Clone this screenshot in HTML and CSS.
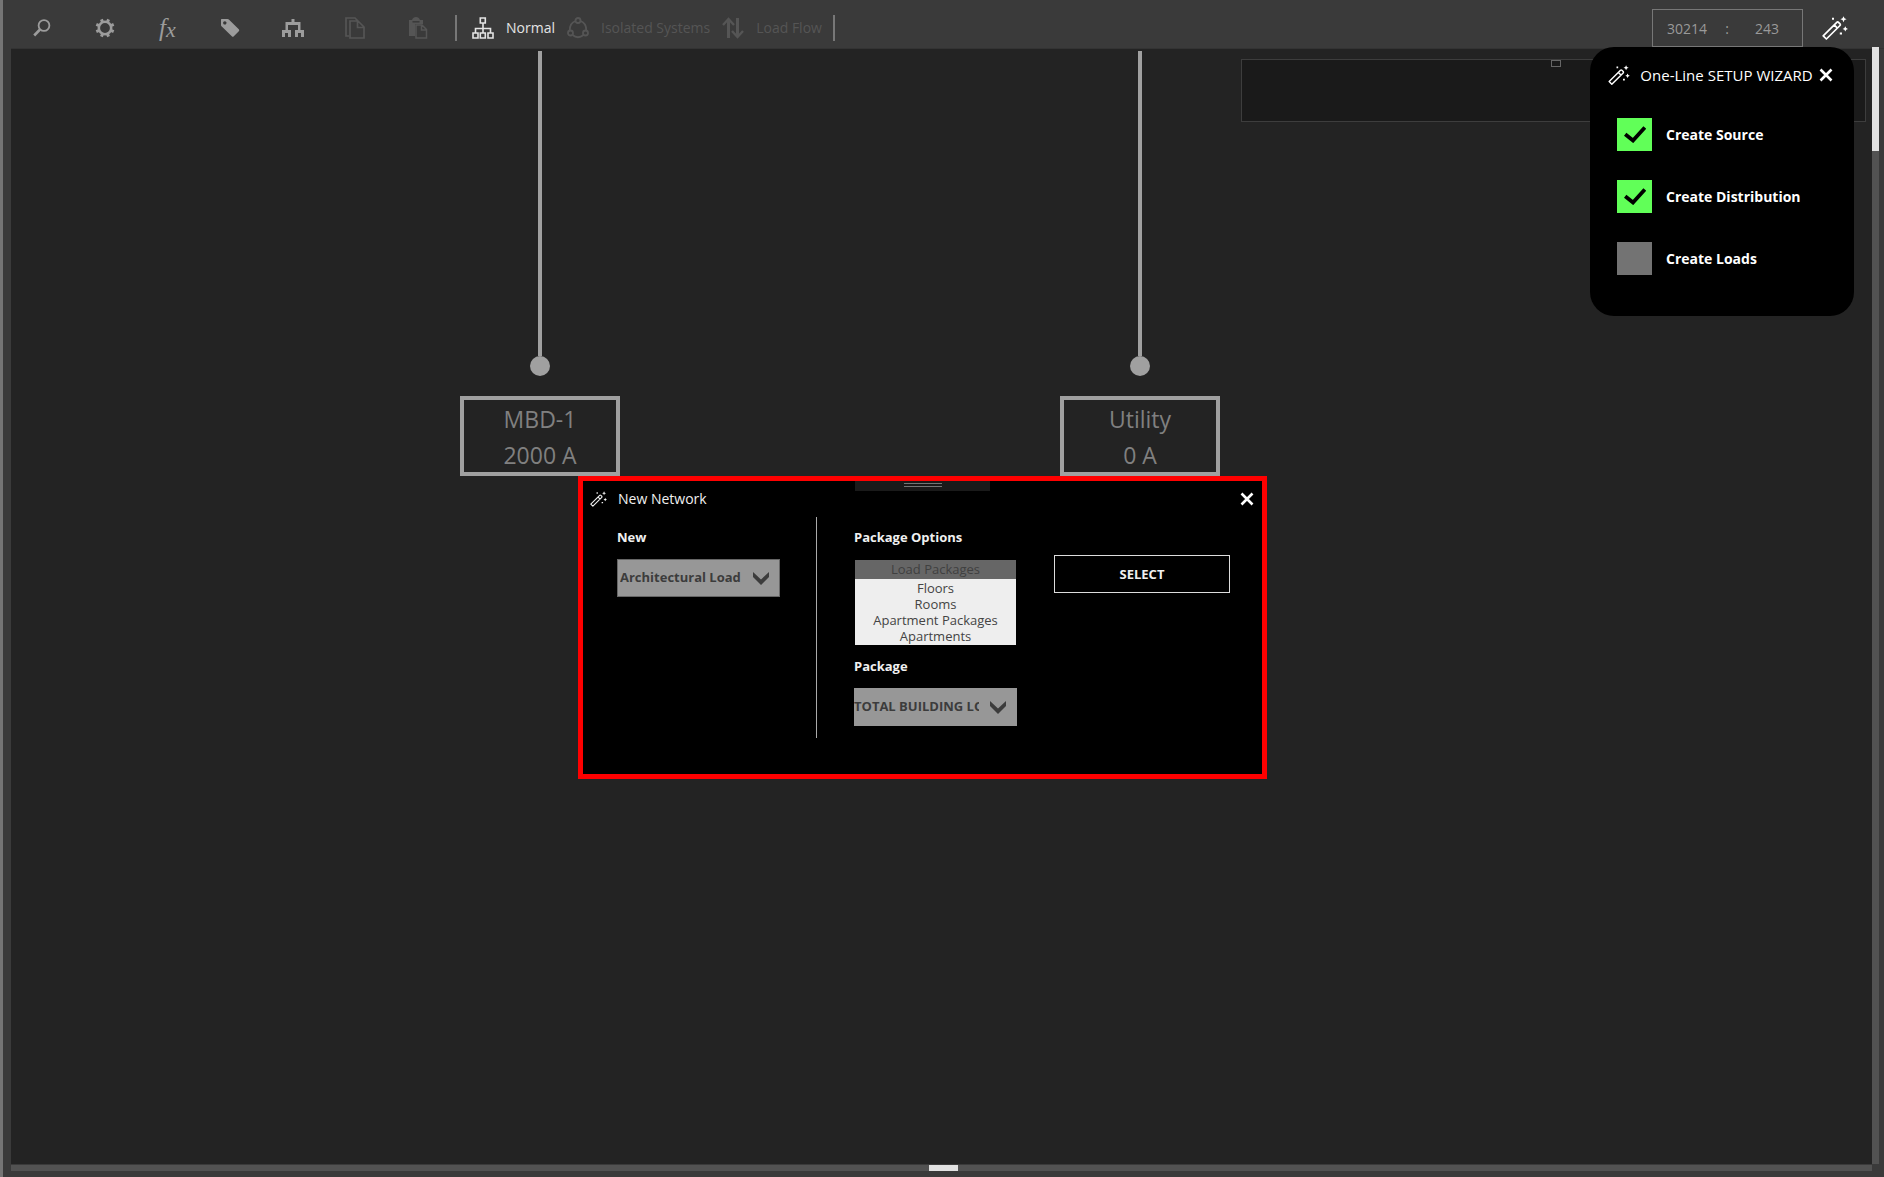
FILE: index.html
```html
<!DOCTYPE html>
<html lang="en">
<head>
<meta charset="utf-8">
<title>One-Line</title>
<link rel="stylesheet" href="styles.css">
</head>
<body>
<svg class="defs" aria-hidden="true">
  <symbol id="wand" viewBox="0 0 26 24">
    <path fill="none" stroke="currentColor" stroke-width="1.700" stroke-linejoin="round" d="M1.200 19.800 14.800 6.300a1.200 1.200 0 0 1 1.700 0l1.500 1.500a1.200 1.200 0 0 1 0 1.700L4.400 23zM12.200 8.900l3.200 3.200"/>
    <path fill="currentColor" d="M21.500 .300 22.500 2.300 24.600 3.200 22.500 4.100 21.500 6.200 20.500 4.100 18.400 3.200 20.500 2.300zM23.300 10.200 24.200 12 26 12.900 24.200 13.800 23.300 15.600 22.400 13.800 20.600 12.900 22.400 12z"/>
    <path fill="currentColor" d="M10 1.800h2v2h-2zM17.800 16.400h2.200v2.200h-2.200z"/>
  </symbol>
  <symbol id="cross" viewBox="0 0 14 14"><path d="M1.500 1.500l11 11M12.500 1.500l-11 11" fill="none" stroke="currentColor" stroke-width="2.600"/></symbol>
  <symbol id="chevron" viewBox="0 0 16 13"><path d="M0 0 8 7.500 16 0v5L8 13 0 5z" fill="currentColor"/></symbol>
  <symbol id="tick" viewBox="0 0 22 17"><path d="M1.200 8.200 9 14.500 20.800 1.500" fill="none" stroke="currentColor" stroke-width="3.800"/></symbol>
</svg>
<div class="app">
  <header class="toolbar">
    <nav class="tools" aria-label="Tools">
      <button class="tool" aria-label="Search"><svg width="18" height="18" viewBox="0 0 18 18" fill="none" stroke="currentColor"><circle cx="11" cy="6.500" r="5.400" stroke-width="1.800"/><path d="M7 10.500 1.200 16.500" stroke-width="2.600"/></svg></button>
      <button class="tool" aria-label="Settings"><svg width="20" height="20" viewBox="0 0 20 20" fill="none" stroke="currentColor"><circle cx="10" cy="10" r="6.200" stroke-width="2.600"/><g stroke-width="3"><path d="M15.900 12.400l2.800 1.200M12.400 15.900l1.200 2.800M7.600 15.900l-1.200 2.800M4.100 12.400l-2.800 1.200M4.100 7.600 1.300 6.400M7.600 4.100 6.400 1.300M12.400 4.100l1.200-2.800M15.900 7.600l2.800-1.200"/></g></svg></button>
      <button class="tool fx" aria-label="Functions"><span class="fx-f">f</span><span class="fx-x">x</span></button>
      <button class="tool" aria-label="Tags"><svg width="20" height="20" viewBox="0 0 20 20"><path fill="currentColor" fill-rule="evenodd" d="M1.500 1h6q1 0 1.600.7l9.700 9.500q1 1 0 2l-5 5q-1 1-2 0L1.800 8.600Q1 8 1 7V1.500zM4.800 3.200a1.700 1.700 0 1 0 .01 0z"/></svg></button>
      <button class="tool" aria-label="Network"><svg width="22" height="18" viewBox="0 0 22 18"><path fill="currentColor" d="M9.500 0h3v3H18.500v8H22v7h-3v-4h-3v4h-3v-7h3V6H6v5h3v7H6v-4H3v4H0v-7h3.500V3h6z"/></svg></button>
      <button class="tool" aria-label="Copy" disabled><svg width="20" height="22" viewBox="0 0 20 22" fill="none" stroke="currentColor" stroke-width="1.700"><path d="M4 19H1V1h9l3 3M5 4h8l6 6v11H5zM12.500 4v6.500H19"/></svg></button>
      <button class="tool" aria-label="Paste" disabled><svg width="20" height="22" viewBox="0 0 20 22"><path fill="currentColor" d="M1 3h3q1-3 4-3t4 3h3v4H7v12H1z"/><path d="M4.500 4.800h7" stroke="#3a3a3a" stroke-width="1.500"/><path d="M8 8h6l4.500 4.500V21H8zM13.500 8v5H18" fill="#3a3a3a" stroke="currentColor" stroke-width="1.500"/></svg></button>
    </nav>
    <div class="modes">
      <button class="mode mode-on"><svg width="22" height="22" viewBox="0 0 22 22" fill="none" stroke="currentColor" stroke-width="1.600"><path d="M8.300 1h5v5h-5zM1 16h5v5H1zM8.300 16h5v5h-5zM16 16h5v5h-5zM11 6v10M3.500 16v-4.500h15V16"/></svg>Normal</button>
      <button class="mode" disabled><svg width="22" height="22" viewBox="0 0 22 22" fill="none" stroke="currentColor" stroke-width="1.800"><circle cx="11" cy="3.500" r="2.500"/><circle cx="3.500" cy="16" r="2.500"/><circle cx="18.500" cy="16" r="2.500"/><path d="M8.500 4Q2.600 6 2.800 13.500M13.500 4q5.900 2 5.700 9.500M5.500 18q5.500 4.500 11 0"/></svg>Isolated Systems</button>
      <button class="mode" disabled><svg width="22" height="22" viewBox="0 0 22 22" fill="none" stroke="currentColor"><path d="M6.500 21V3M15.500 1v18" stroke-width="3"/><path d="M1 8l5.500-6L12 8M10 14l5.500 6 5.500-6" stroke-width="2.400"/></svg>Load Flow</button>
    </div>
    <div class="coords"><output>30214</output><span>:</span><output>243</output></div>
    <button class="wand-btn" aria-label="Setup wizard"><svg width="26" height="24"><use href="#wand"/></svg></button>
  </header>

  <main class="canvas">
    <div class="minimap"><i class="minimap-view"></i></div>
    <div class="node node-mbd">
      <span class="wire"></span><span class="dot"></span>
      <div class="box"><span>MBD-1</span><span>2000 A</span></div>
    </div>
    <div class="node node-utility">
      <span class="wire"></span><span class="dot"></span>
      <div class="box"><span>Utility</span><span>0 A</span></div>
    </div>
  </main>
  <div class="vscroll"><i></i></div>
  <div class="hscroll"><i></i></div>

  <section class="wizard" aria-label="Setup wizard">
    <header class="wizard-head">
      <svg width="22" height="20"><use href="#wand"/></svg>
      <h2><span>One-Line</span> <span>SETUP WIZARD</span></h2>
      <button class="close" aria-label="Close"><svg width="14" height="14"><use href="#cross"/></svg></button>
    </header>
    <label class="step"><span class="tickbox"><input type="checkbox" checked><svg width="22" height="17"><use href="#tick"/></svg></span>Create Source</label>
    <label class="step"><span class="tickbox"><input type="checkbox" checked><svg width="22" height="17"><use href="#tick"/></svg></span>Create Distribution</label>
    <label class="step"><span class="tickbox"><input type="checkbox"><svg width="22" height="17"><use href="#tick"/></svg></span>Create Loads</label>
  </section>

  <section class="dialog" role="dialog" aria-label="New Network">
    <div class="grip"><i></i></div>
    <header class="dialog-head">
      <svg width="17" height="16"><use href="#wand"/></svg>
      <h2>New Network</h2>
      <button class="close" aria-label="Close"><svg width="14" height="14"><use href="#cross"/></svg></button>
    </header>
    <div class="dialog-body">
      <div class="col col-new">
        <label for="new">New</label>
        <div class="drop"><select id="new"><option>Architectural Load</option></select><svg width="16" height="13"><use href="#chevron"/></svg></div>
      </div>
      <div class="col col-package">
        <label for="options">Package Options</label>
        <select id="options" class="list" size="5">
          <option class="list-head">Load Packages</option>
          <option>Floors</option>
          <option>Rooms</option>
          <option>Apartment Packages</option>
          <option>Apartments</option>
        </select>
        <label for="package">Package</label>
        <div class="drop drop-flush"><select id="package"><option>TOTAL BUILDING LOAD</option></select><svg width="16" height="13"><use href="#chevron"/></svg></div>
      </div>
      <button class="select-btn">SELECT</button>
    </div>
  </section>
</div>
</body>
</html>
```
FILE: styles.css
```css
* { box-sizing: border-box; }
body { margin: 0; font-family: "Open Sans", "Noto Sans", sans-serif; font-size: 14px; background: #3a3a3a; }
button { background: none; border: 0; padding: 0; font: inherit; color: inherit; }
h2 { margin: 0; font-size: 15px; font-weight: 400; line-height: 20px; }
svg { display: block; flex: none; }
.defs { position: absolute; width: 0; height: 0; }

.app {
  position: relative;
  min-height: 100vh;
  display: grid;
  grid-template: 49px 1fr 7px 6px / 1fr 12px;
  padding-left: 8px;
  border-left: 3px solid #757575;
  overflow: hidden;
}

/* Toolbar */
.toolbar { grid-column: 1 / 3; display: flex; align-items: center; padding-right: 36px; border-bottom: 1px solid #333; }
.tools { display: grid; grid-template-columns: repeat(7, 1fr); width: 438px; height: 40px; margin-top: 8px; }
.tool { display: flex; align-items: center; justify-content: center; height: 40px; color: #9c9c9c; }
.tool:disabled { color: #555; }
.fx { font-family: "Liberation Serif", serif; font-style: italic; line-height: 24px; }
.fx-f { font-size: 25px; }
.fx-x { font-size: 22px; padding-top: 4px; }
.modes {
  display: flex; align-items: center; gap: 12px; height: 26px; margin: 7px 0 0 6px; padding: 0 11px 0 15px;
  border: solid #777; border-width: 0 2px;
}
.mode { display: flex; align-items: center; gap: 12px; line-height: 24px; color: #555; }
.mode-on { color: #e4e4e4; }
.coords {
  display: flex; justify-content: space-between; align-items: center;
  width: 151px; height: 38px; margin: 8px 19px 0 auto; padding: 0 23px 0 14px;
  border: 1px solid #777; color: #999;
}
.coords span { margin-right: 8px; }
.wand-btn { color: #fff; margin-top: 8px; }

/* Drawing area */
.canvas { position: relative; background: #232323; overflow: hidden; }
.minimap {
  display: flex; justify-content: center; width: 625px; height: 63px; margin: 10px 6px 0 auto; padding-left: 4px;
  background: #1a1a1a; border: 1px solid #3d3d3d;
}
.minimap-view { width: 10px; height: 7px; border: 1px solid #666; }
.node { position: absolute; top: 2px; display: flex; flex-direction: column; align-items: center; width: 160px; }
.node-mbd { left: 449px; }
.node-utility { left: 1049px; }
.wire { width: 4px; height: 305px; background: #a0a0a0; }
.dot { width: 20px; height: 20px; border-radius: 50%; background: #a0a0a0; margin-bottom: 20px; }
.box {
  display: flex; flex-direction: column; align-items: center; width: 100%; height: 80px; padding-top: 1px;
  border: 4px solid #a0a0a0; color: #808080; font-size: 23px; line-height: 36px;
}

.vscroll { width: 7px; background: #525252; }
.vscroll i { display: block; width: 7px; height: 104px; margin-top: -2px; background: #e2e2e2; }
.hscroll { display: flex; justify-content: center; height: 6px; margin-top: 1px; padding-left: 4px; background: #525252; }
.hscroll i { width: 29px; background: #e2e2e2; }

/* Setup wizard */
.wizard {
  position: absolute; top: 47px; right: 30px; width: 264px; min-height: 269px;
  padding: 18px 21px 0 18px; background: #000; color: #fff; border-radius: 24px;
}
.wizard-head { display: flex; align-items: center; justify-content: space-between; margin-bottom: 31px; }
.wizard h2 { display: flex; gap: 4px; margin-left: 4px; }
.close { color: #fff; }
.step { display: flex; align-items: center; gap: 14px; height: 36px; margin: 0 0 26px 9px; font-weight: 700; }
.tickbox { display: grid; place-items: center; }
.tickbox > * { grid-area: 1 / 1; }
.tickbox input { appearance: none; width: 35px; height: 33px; margin: 0; background: #737373; }
.tickbox input:checked { background: #61ff58; }
.tickbox svg { display: none; color: #000; pointer-events: none; }
.tickbox input:checked + svg { display: block; }

/* New Network dialog */
.dialog { position: absolute; top: 476px; left: 575px; width: 689px; min-height: 303px; border: 5px solid #f00; background: #000; color: #f0f0f0; }
.grip { position: absolute; top: 0; left: 272px; width: 135px; height: 10px; background: #1a1a1a; }
.grip i { display: block; width: 38px; height: 4px; margin: 2px auto; border: solid #757575; border-width: 1px 0; }
.dialog-head { display: flex; align-items: center; gap: 11px; padding: 8px 8px 0 7px; }
.dialog-head h2 { font-size: 14px; flex: 1; }
.dialog-body { display: flex; align-items: flex-start; padding: 8px 32px 0 34px; font-size: 13px; }
.col { display: flex; flex-direction: column; align-items: flex-start; padding-top: 11px; }
.col label { font-weight: 700; line-height: 18px; }
.col-new { width: 200px; min-height: 221px; border-right: 1px solid #aaa; }
.col-package { width: 201px; padding-left: 37px; }
.drop { position: relative; margin-top: 13px; }
.drop select {
  appearance: none; width: 163px; height: 38px; padding: 0 38px 2px 2px; border: 1px solid #666; border-radius: 0;
  background: #979797; color: #3c3c3c; font: 700 13px "Open Sans", sans-serif; text-overflow: clip;
}
.drop-flush select { padding-left: 0; border-width: 0; }
.drop svg { position: absolute; right: 11px; top: 13px; color: #3c3c3c; pointer-events: none; }
.list {
  width: 161px; height: 85px; margin: 14px 0 12px 1px; padding: 0; overflow: hidden; border: 0; border-radius: 0;
  background: #eee; color: #444; font: 13px "Open Sans", sans-serif; text-align: center;
}
.list option { min-height: 0; height: 16px; padding: 0; line-height: 16px; }
.list .list-head { height: 19px; background: #666; color: #404040; }
.select-btn { width: 176px; height: 38px; margin: 38px 0 0 auto; border: 1px solid #ddd; font-weight: 700; }
```
